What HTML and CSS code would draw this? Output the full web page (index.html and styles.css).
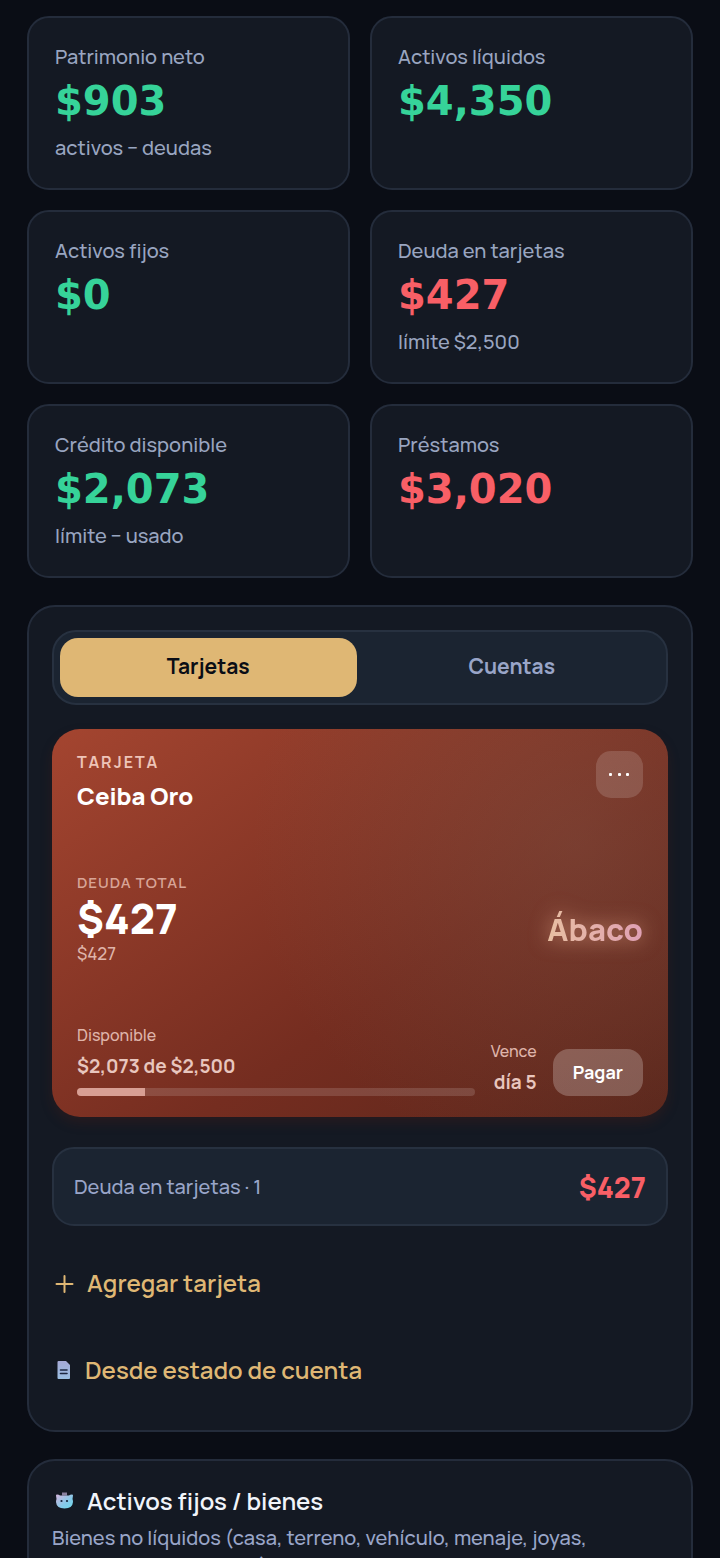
FILE: index.html
```html
<!DOCTYPE html>
<html lang="es">
<head>
    <meta charset="UTF-8">
    <meta name="viewport" content="width=device-width, initial-scale=1.0">
    <title>Patrimonio</title>
    <link rel="stylesheet" href="styles.css">
</head>
<body>
    <main class="page">
        <section class="stats">
            <div class="stat">
                <div class="stat-label">Patrimonio neto</div>
                <div class="stat-value positive">$903</div>
                <div class="stat-note">activos − deudas</div>
            </div>
            <div class="stat">
                <div class="stat-label">Activos líquidos</div>
                <div class="stat-value positive">$4,350</div>
            </div>
            <div class="stat">
                <div class="stat-label">Activos fijos</div>
                <div class="stat-value positive">$0</div>
            </div>
            <div class="stat">
                <div class="stat-label">Deuda en tarjetas</div>
                <div class="stat-value negative">$427</div>
                <div class="stat-note">límite $2,500</div>
            </div>
            <div class="stat">
                <div class="stat-label">Crédito disponible</div>
                <div class="stat-value positive">$2,073</div>
                <div class="stat-note">límite − usado</div>
            </div>
            <div class="stat">
                <div class="stat-label">Préstamos</div>
                <div class="stat-value negative">$3,020</div>
            </div>
        </section>

        <section class="panel">
            <div class="tabs">
                <button type="button" class="tab active">Tarjetas</button>
                <button type="button" class="tab">Cuentas</button>
            </div>

            <article class="credit-card">
                <div class="card-top">
                    <div>
                        <div class="card-kind">TARJETA</div>
                        <h2 class="card-name">Ceiba Oro</h2>
                    </div>
                    <button type="button" class="more" aria-label="Opciones">
                        <svg viewBox="0 0 24 24" width="24" height="24" fill="#fff">
                            <rect x="1" y="10" width="3" height="3" rx="1"/>
                            <rect x="10" y="10" width="3" height="3" rx="1"/>
                            <rect x="18" y="10" width="3" height="3" rx="1"/>
                        </svg>
                    </button>
                </div>
                <div class="card-middle">
                    <div>
                        <div class="debt-label">DEUDA TOTAL</div>
                        <div class="debt-value">$427</div>
                        <div class="debt-sub">$427</div>
                    </div>
                    <div class="brand"><span class="brand-name">Ábaco</span></div>
                </div>
                <div class="card-bottom">
                    <div class="available">
                        <div class="small-label">Disponible</div>
                        <div class="small-value">$2,073 de $2,500</div>
                        <div class="bar"><div class="bar-fill" style="width: 17%"></div></div>
                    </div>
                    <div class="due">
                        <div class="small-label">Vence</div>
                        <div class="small-value">día 5</div>
                    </div>
                    <button type="button" class="pay">Pagar</button>
                </div>
            </article>

            <div class="total">
                <span>Deuda en tarjetas · 1</span>
                <strong class="total-value">$427</strong>
            </div>

            <button type="button" class="action">
                <svg class="icon" viewBox="0 0 24 24" width="24" height="24" fill="none" stroke="currentColor" stroke-width="2" stroke-linecap="round">
                    <path d="M12.500 5v16M4.500 13h16"/>
                </svg>
                Agregar tarjeta
            </button>
            <button type="button" class="action">
                <svg class="icon" viewBox="0 0 22 24" width="22" height="24">
                    <defs>
                        <linearGradient id="docFill" x1="0" y1="0" x2="0" y2="1">
                            <stop offset="0" stop-color="#a5a9d6"/>
                            <stop offset="1" stop-color="#9bbfe2"/>
                        </linearGradient>
                    </defs>
                    <path fill="url(#docFill)" d="M6.500 3h7.500l4 4v13q0 1-1 1H6.500q-1 0-1-1V4q0-1 1-1z"/>
                    <path stroke="#1d2740" stroke-width="1.600" stroke-linecap="round" d="M8.500 12h6.500M8.500 15.500h6.500"/>
                </svg>
                Desde estado de cuenta
            </button>
        </section>

        <section class="panel assets">
            <h2 class="assets-title">
                <svg class="icon" viewBox="0 0 24 24" width="24" height="24">
                    <defs>
                        <linearGradient id="pigFill" x1="0" y1="0" x2="1" y2="1">
                            <stop offset="0" stop-color="#d5b4dc"/>
                            <stop offset="0.6" stop-color="#84cae9"/>
                            <stop offset="1" stop-color="#6fdbed"/>
                        </linearGradient>
                    </defs>
                    <path fill="#8a809f" d="M10 3.500h5v3h-5z"/>
                    <path fill="url(#pigFill)" d="M4 6.500q0-1 1-1 2 0 3 1h9q1-1 3-1 1 0 1 1l-.5 3.500q.5 1.500.5 3-.5 6.500-8.500 6.500T4 13q0-1.500.5-3z"/>
                    <circle cx="9.500" cy="12" r="1.100" fill="#15233a"/>
                    <circle cx="15" cy="12" r="1.100" fill="#15233a"/>
                </svg>
                Activos fijos / bienes
            </h2>
            <p class="assets-text">Bienes no líquidos (casa, terreno, vehículo, menaje, joyas, equipos, obras de arte). Suman al patrimonio, pero no entran al gasto.</p>
        </section>
    </main>
</body>
</html>
```

FILE: styles.css
```css
* {
    box-sizing: border-box;
}
html {
    background: #0a0d15;
    overflow: hidden;
}
body {
    margin: 0;
    height: 100vh;
    overflow: hidden;
    color: #f1f4fa;
    font-family: Manrope, Inter, sans-serif;
    font-size: 20px;
    font-weight: 500;
    line-height: 28px;
}
button {
    border: none;
    font-family: inherit;
    cursor: pointer;
}
.page {
    padding: 16px 27px 0;
}
.stats {
    display: grid;
    grid-template-columns: 1fr 1fr;
    gap: 20px;
    margin-bottom: 27px;
}
.stat {
    min-height: 174px;
    padding: 25px 26px;
    background: #141923;
    border: 2px solid #242c3b;
    border-radius: 22px;
    color: #99a5c0;
}
.stat-value {
    padding-top: 2px;
    font-family: "DejaVu Sans", sans-serif;
    font-size: 40px;
    font-weight: bold;
    line-height: 56px;
    margin-bottom: 5px;
}
.positive {
    color: #36d399;
}
.negative {
    color: #f85f66;
}
.panel {
    margin-bottom: 27px;
    padding: 23px;
    background: #141923;
    border: 2px solid #242c3b;
    border-radius: 28px;
}
.tabs {
    display: grid;
    grid-template-columns: 1fr 1fr;
    gap: 7px;
    padding: 6px;
    background: #1b2431;
    border: 2px solid #273140;
    border-radius: 24px;
}
.tab {
    height: 59px;
    padding: 0 0 3px;
    background: transparent;
    border-radius: 18px;
    color: #99a5c8;
    font-size: 21px;
    font-weight: 700;
}
.tab.active {
    background: #dfb774;
    color: #0a0d15;
}
.credit-card {
    display: flex;
    flex-direction: column;
    justify-content: space-between;
    min-height: 388px;
    margin-top: 24px;
    padding: 22px 25px 21px;
    border-radius: 28px;
    background:
        radial-gradient(circle at 85% 30%, rgba(130, 100, 85, 0.3), rgba(130, 100, 85, 0) 55%),
        linear-gradient(145deg, #a44530 0%, #752d20 60%, #5a261b 100%);
    box-shadow: 0 6px 12px rgba(90, 30, 20, 0.25);
}
.card-top,
.card-middle {
    display: flex;
    justify-content: space-between;
}
.card-kind {
    color: #eec4b8;
    font-size: 16px;
    font-weight: 700;
    letter-spacing: 2px;
    line-height: 22px;
}
.card-name {
    margin: 6px 0 0;
    color: #fff;
    font-size: 24px;
    font-weight: 800;
    line-height: 34px;
}
.more {
    display: flex;
    align-items: center;
    justify-content: center;
    width: 47px;
    height: 47px;
    padding: 0;
    background: rgba(255, 255, 255, 0.15);
    border-radius: 15px;
}
.card-middle {
    align-items: center;
}
.debt-label {
    color: #d8a497;
    font-size: 15px;
    font-weight: 600;
    letter-spacing: 1px;
    line-height: 20px;
}
.debt-value {
    color: #fff;
    font-size: 42px;
    font-weight: 800;
    line-height: 50px;
}
.debt-sub {
    color: #dfb4aa;
    font-size: 17px;
    line-height: 22px;
}
.brand {
    padding-top: 20px;
    filter: drop-shadow(0 0 10px rgba(255, 190, 160, 0.6));
}
.brand-name {
    background: linear-gradient(90deg, #e8bfa2, #dfa0b4);
    -webkit-background-clip: text;
    background-clip: text;
    color: transparent;
    font-size: 31px;
    font-weight: 800;
    line-height: 40px;
}
.card-bottom {
    display: flex;
    align-items: flex-end;
    gap: 16px;
}
.available {
    flex: 1;
}
.small-label {
    color: #dfb4aa;
    font-size: 16px;
    line-height: 22px;
}
.small-value {
    margin-top: 6px;
    color: #e8c6be;
    font-size: 19px;
    font-weight: 700;
    line-height: 28px;
}
.bar {
    height: 8px;
    margin-top: 8px;
    overflow: hidden;
    background: rgba(255, 255, 255, 0.14);
    border-radius: 4px;
}
.bar-fill {
    height: 100%;
    background: #d89f94;
}
.due {
    text-align: right;
}
.pay {
    height: 47px;
    padding: 0 20px 2px;
    background: rgba(255, 255, 255, 0.23);
    border-radius: 16px;
    color: #fff;
    font-size: 18px;
    font-weight: 700;
}
.total {
    display: flex;
    align-items: center;
    justify-content: space-between;
    height: 79px;
    margin: 30px 0 24px;
    padding: 0 20px;
    background: #1b2431;
    border: 2px solid #273140;
    border-radius: 22px;
    color: #99a5c8;
}
.total-value {
    color: #f85f66;
    font-size: 28px;
    font-weight: 800;
}
.action {
    display: flex;
    align-items: center;
    gap: 11px;
    width: 100%;
    height: 67px;
    padding: 0 0 2px;
    background: transparent;
    color: #dfb774;
    font-size: 24px;
    font-weight: 600;
}
.action + .action {
    margin-top: 20px;
    margin-bottom: 3px;
}
.icon {
    flex: none;
}
.assets-title {
    display: flex;
    align-items: center;
    gap: 11px;
    margin: 0;
    font-size: 24px;
    font-weight: 600;
    line-height: 34px;
}
.assets-text {
    margin: 6px 0 0;
    color: #99a5c8;
}
```
